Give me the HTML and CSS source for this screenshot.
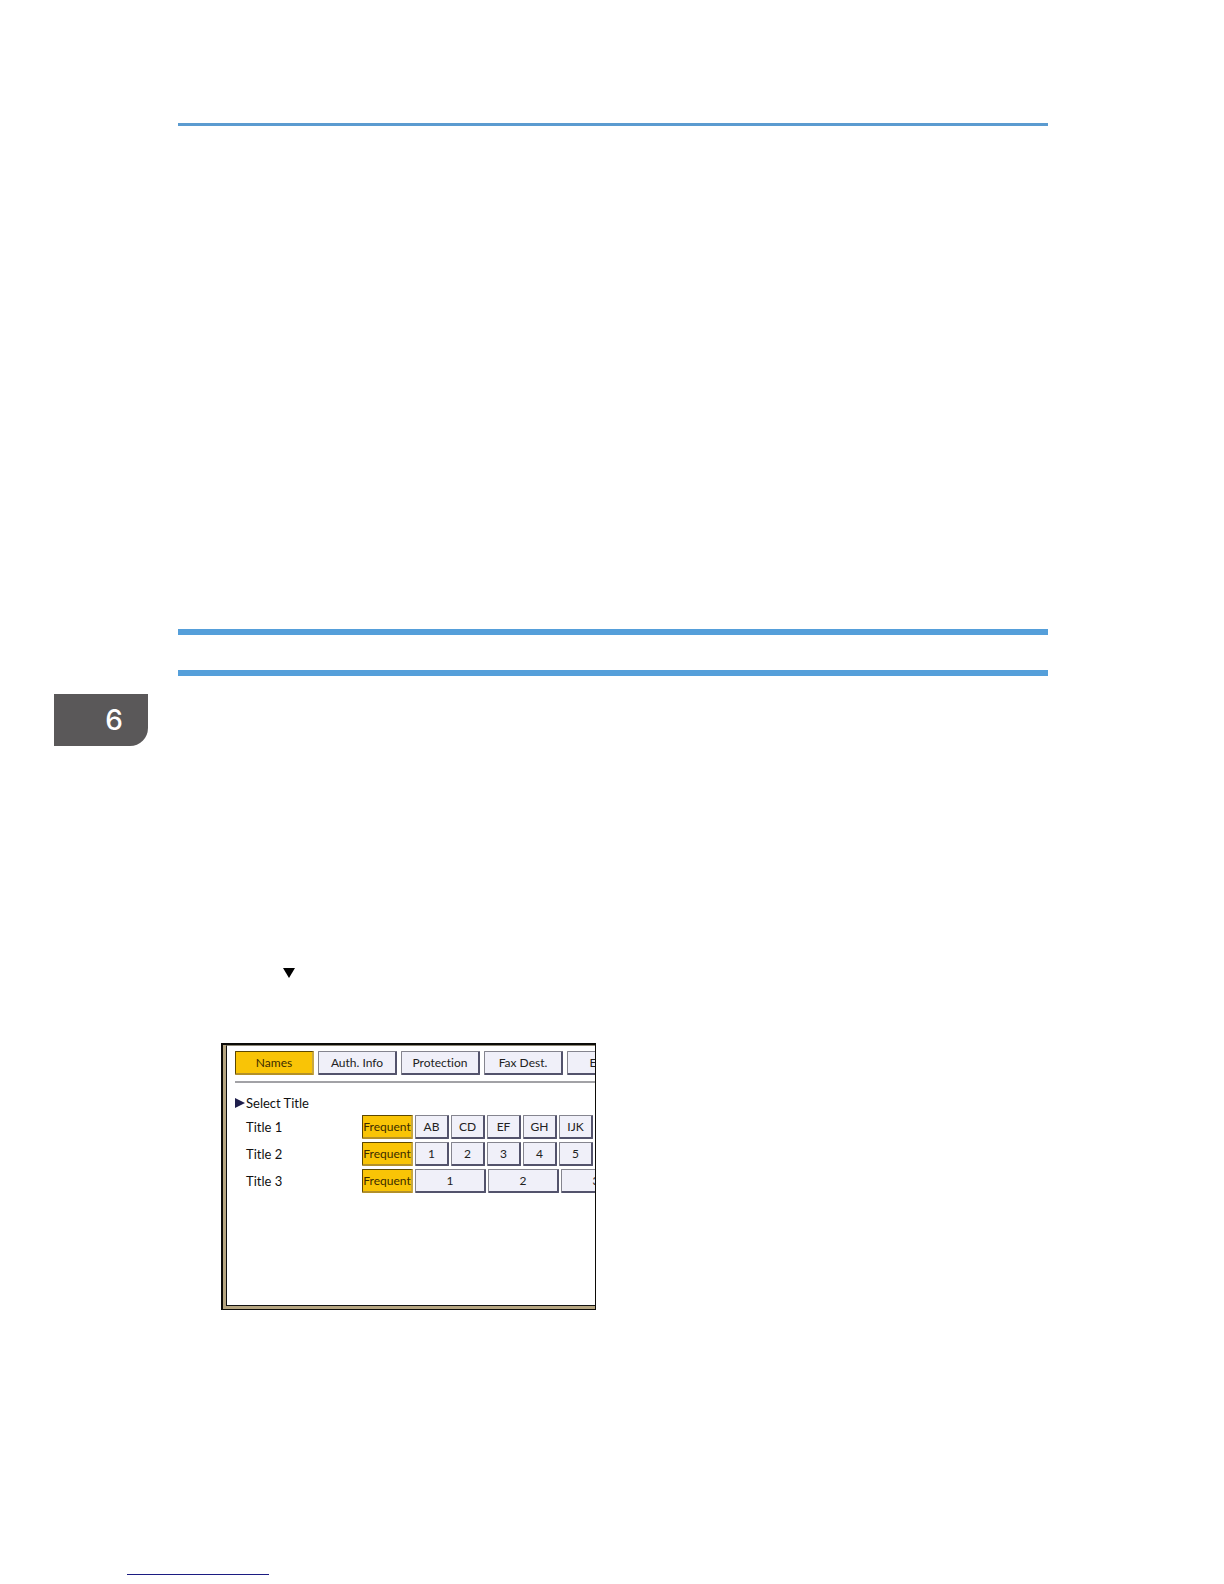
FILE: index.html
```
<!DOCTYPE html>
<html lang="en">
<head>
  <meta charset="UTF-8">
  <title>Select Title</title>
  <link rel="stylesheet" href="styles.css">
</head>
<body>
  <hr class="top-rule">

  <main>
    <div class="section-bar"></div>
    <div class="chapter-tab">6</div>

    <svg class="down-mark" viewBox="0 0 12 10" aria-hidden="true"><path d="M0 0h12L6 10z"/></svg>

    <div class="panel">
      <div class="screen">
        <nav class="tabs">
          <button type="button" class="key selected">Names</button>
          <button type="button" class="key">Auth. Info</button>
          <button type="button" class="key">Protection</button>
          <button type="button" class="key">Fax Dest.</button>
          <button type="button" class="key">E-mail</button>
        </nav>

        <h2 class="select-title">
          <svg class="arrow" viewBox="0 0 11 12" aria-hidden="true"><path d="M0 1l10 5L0 11z"/></svg>Select Title
        </h2>

        <div class="title-row">
          <span class="title-name">Title 1</span>
          <button type="button" class="key frequent selected">Frequent</button>
          <button type="button" class="key">AB</button>
          <button type="button" class="key">CD</button>
          <button type="button" class="key">EF</button>
          <button type="button" class="key">GH</button>
          <button type="button" class="key">IJK</button>
        </div>
        <div class="title-row">
          <span class="title-name">Title 2</span>
          <button type="button" class="key frequent selected">Frequent</button>
          <button type="button" class="key">1</button>
          <button type="button" class="key">2</button>
          <button type="button" class="key">3</button>
          <button type="button" class="key">4</button>
          <button type="button" class="key">5</button>
        </div>
        <div class="title-row wide">
          <span class="title-name">Title 3</span>
          <button type="button" class="key frequent selected">Frequent</button>
          <button type="button" class="key">1</button>
          <button type="button" class="key">2</button>
          <button type="button" class="key">3</button>
        </div>
      </div>
    </div>
  </main>

  <hr class="foot-rule">
</body>
</html>
```
FILE: styles.css
```
* { box-sizing: border-box; }
body { margin: 0; padding: 123px 176px 8px 178px; background: #fff; color: #111; font-family: Lato, "Liberation Sans", sans-serif; }
hr { border: none; margin: 0; }

.top-rule { height: 3px; background: #5b9bd0; }
.section-bar { height: 47px; margin-top: 503px; border: solid #559fda; border-width: 6px 0; }

/* chapter tab sits in the left margin */
.chapter-tab {
  width: 94px;
  height: 52px;
  margin: 18px 0 0 -124px;
  padding-right: 25px;
  background: #5a5859;
  color: #fff;
  border-bottom-right-radius: 18px;
  font-family: Inter, "Liberation Sans", sans-serif;
  font-size: 28px;
  font-weight: 500;
  line-height: 52px;
  text-align: right;
}

.down-mark { display: block; width: 12px; height: 10px; margin: 222px 0 0 105px; }

.panel {
  width: 375px;
  height: 267px;
  margin: 65px 0 0 43px;
  padding: 0 0 3px 3px;
  background: #b5a581;
  border: 1px solid #0c0b08;
  border-width: 2px 1px 1px 2px;
}
.screen {
  height: 100%;
  padding: 5px 0 0 8px;
  overflow: hidden;
  background: #fff;
  border: 1px solid #111;
  border-width: 1px 0 1px 1px;
  border-top-color: #8d8878;
  font-size: 13px;
  font-variant-ligatures: none;
}

.tabs { display: flex; gap: 4px; padding-bottom: 6px; border-bottom: 2px solid #a2a2a6; }
.tabs .key { width: 79px; }

.key {
  flex: none;
  height: 24px;
  padding: 0;
  background: #f0f0f9;
  color: #222;
  border: 1px solid #85858f;
  border-right: 2px solid #53536c;
  border-bottom: 2px solid #53536c;
  border-radius: 1px;
  font: inherit;
  font-size: 12px;
  font-variant-ligatures: none;
  text-align: center;
  cursor: pointer;
}
.key.selected {
  background: #f9c406;
  color: #3c2c00;
  border-color: #5c4700 #c9a840 #b39028 #5c4700;
}

.select-title { display: flex; align-items: center; height: 20px; margin: 10px 0 2px; font-size: 13px; font-weight: normal; }
.arrow { width: 11px; height: 12px; fill: #1f1f4c; }

.title-row { display: flex; align-items: center; gap: 2px; margin-bottom: 3px; }
.title-name { flex: none; width: 125px; padding-left: 11px; }
.title-row .key { width: 34px; }
.title-row .frequent { width: 51px; }
.title-row.wide .key:not(.frequent) { width: 71px; }

.foot-rule { width: 142px; height: 1px; margin: 264px 0 0 -51px; background: #1c1c82; }
```
